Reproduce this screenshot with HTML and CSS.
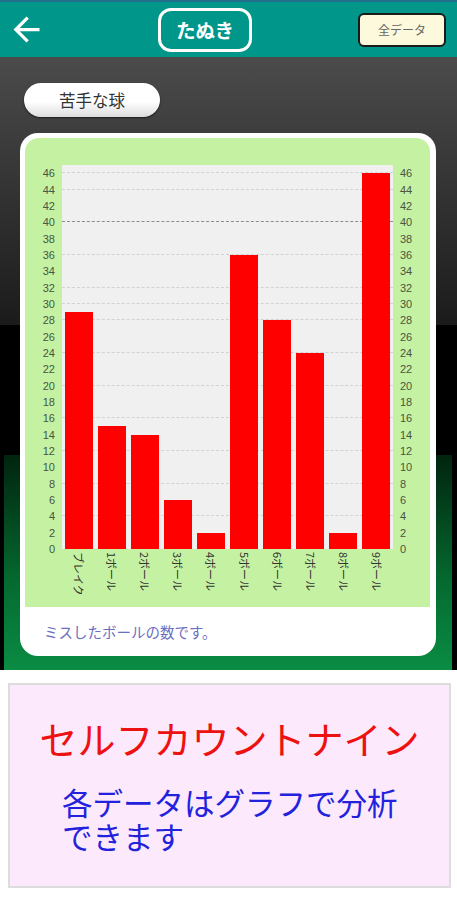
FILE: index.html
```html
<!DOCTYPE html>
<html lang="ja">
<head>
    <meta charset="UTF-8">
    <meta name="viewport" content="width=device-width, initial-scale=1.0">
    <title>苦手な球</title>
    <link rel="stylesheet" href="styles.css">
</head>
<body>
    <header class="topbar">
        <svg class="back" width="39" height="39" viewBox="0 0 24 24"><path d="M20 11H7.83l5.59-5.59L12 4l-8 8 8 8 1.41-1.41L7.83 13H20v-2z" fill="#fff"/></svg>
        <div class="player">たぬき</div>
        <div class="all-data">全データ</div>
    </header>

    <main class="stage">
        <div class="pill">苦手な球</div>
        <div class="card">
            <div class="chart">
                <div class="axis left" id="axisLeft"></div>
                <div class="plot" id="plot"></div>
                <div class="axis right" id="axisRight"></div>
                <div class="xlabels" id="xLabels"></div>
            </div>
            <p class="caption">ミスしたボールの数です。</p>
        </div>
    </main>

    <section class="promo-wrap">
        <div class="promo">
            <h1>セルフカウントナイン</h1>
            <p>各データはグラフで分析できます</p>
        </div>
    </section>

    <script>
        const data = [
            ['ブレイク', 29], ['1ボール', 15], ['2ボール', 14], ['3ボール', 6], ['4ボール', 2],
            ['5ボール', 36], ['6ボール', 28], ['7ボール', 24], ['8ボール', 2], ['9ボール', 46]
        ];
        const max = 47;
        const grid = [4, 8, 12, 16, 20, 24, 28, 30, 32, 36, 40, 44, 46];

        function pct(v) {
            return (v / max * 100) + '%';
        }

        ['axisLeft', 'axisRight'].forEach(id => {
            const axis = document.getElementById(id);
            for (let v = 0; v <= 46; v += 2) {
                const tick = document.createElement('span');
                tick.className = 'tick';
                tick.textContent = v;
                tick.style.bottom = pct(v);
                axis.appendChild(tick);
            }
        });

        const plot = document.getElementById('plot');
        grid.forEach(v => {
            const line = document.createElement('div');
            line.className = v === 40 ? 'gridline strong' : 'gridline';
            line.style.bottom = pct(v);
            plot.appendChild(line);
        });

        const labels = document.getElementById('xLabels');
        data.forEach(([name, value]) => {
            const slot = document.createElement('div');
            slot.className = 'slot';
            const bar = document.createElement('div');
            bar.className = 'bar';
            bar.style.height = pct(value);
            slot.appendChild(bar);
            plot.appendChild(slot);

            const label = document.createElement('div');
            label.className = 'xlabel';
            label.innerHTML = '<span>' + name + '</span>';
            labels.appendChild(label);
        });
    </script>
</body>
</html>
```

FILE: styles.css
```css
body {
    margin: 0;
    font-family: "Noto Sans CJK JP", "Liberation Sans", sans-serif;
    background-color: #fff;
}

.topbar {
    height: 57px;
    box-sizing: border-box;
    border-top: 2px solid #24708c;
    background-color: #00968a;
    display: flex;
    align-items: center;
    padding-left: 7px;
}
.back {
    display: block;
}
.player {
    margin-left: 112px;
    width: 94px;
    height: 44px;
    box-sizing: border-box;
    border: 3px solid #fff;
    border-radius: 13px;
    display: flex;
    align-items: center;
    justify-content: center;
    color: #fff;
    font-size: 19.5px;
    font-weight: bold;
}
.all-data {
    margin-left: auto;
    margin-right: 11px;
    width: 88px;
    height: 34px;
    box-sizing: border-box;
    border: 2px solid #1a1a1a;
    border-radius: 6px;
    background-color: #fdf9dc;
    display: flex;
    align-items: center;
    justify-content: center;
    font-size: 12px;
    color: #666;
}

.stage {
    height: 613px;
    box-sizing: border-box;
    padding-top: 26px;
    background:
        linear-gradient(#4b4b4b, #1b1b1b) 0 0 / 100% 268px no-repeat,
        linear-gradient(#01240f, #056b30 60%, #0a8c44) 4px 398px / 448px 215px no-repeat,
        #000;
}

.pill {
    margin-left: 24px;
    width: 136px;
    height: 34px;
    border-radius: 17px;
    background: linear-gradient(#fff 55%, #dcdcdc);
    box-shadow: 0 1px 2px rgba(0, 0, 0, 0.6);
    display: flex;
    align-items: center;
    justify-content: center;
    font-size: 16.5px;
    color: #333;
}

.card {
    margin: 16px 0 0 20px;
    width: 416px;
    height: 523px;
    box-sizing: border-box;
    padding: 5px 6px 0 5px;
    background-color: #fff;
    border-radius: 18px;
}

.chart {
    display: grid;
    grid-template-columns: 37px 331px 37px;
    grid-template-rows: 384px 58px;
    padding-top: 27px;
    background-color: #c5f2a2;
    border-radius: 14px 14px 0 0;
}

.axis {
    position: relative;
    font-family: "Liberation Sans", sans-serif;
    font-size: 11px;
    color: #4a5444;
}
.tick {
    position: absolute;
    line-height: 1;
    transform: translateY(50%);
}
.axis.left .tick {
    right: 7px;
}
.axis.right .tick {
    left: 7px;
}

.plot {
    position: relative;
    display: flex;
    align-items: flex-end;
    background-color: #f0f0f0;
}
.gridline {
    position: absolute;
    left: 0;
    right: 0;
    border-top: 1px dashed #d2d2d2;
}
.gridline.strong {
    border-top-color: #8c8c8c;
}
.slot {
    position: relative;
    flex: 1;
    height: 100%;
    display: flex;
    align-items: flex-end;
    justify-content: center;
}
.bar {
    width: 28px;
    background-color: #f00;
}

.xlabels {
    grid-column: 2;
    display: flex;
}
.xlabel {
    flex: 1;
    display: flex;
    justify-content: center;
    padding-top: 3px;
}
.xlabel span {
    writing-mode: vertical-rl;
    text-orientation: sideways;
    font-size: 11px;
    line-height: 1;
    color: #333;
}

.caption {
    margin: 0;
    height: 49px;
    line-height: 49px;
    padding-left: 19px;
    font-size: 14.5px;
    color: #6b6fc0;
}

.promo-wrap {
    padding: 13px 6px 12px 8px;
}
.promo {
    height: 205px;
    box-sizing: border-box;
    border: 2px solid #ddd;
    background-color: #fce9fc;
}
.promo h1 {
    margin: 0;
    padding-top: 31px;
    text-align: center;
    font-size: 38px;
    line-height: 44px;
    font-weight: normal;
    color: #ee1111;
}
.promo p {
    margin: 25px 0 0;
    padding: 0 30px 0 52px;
    font-size: 30.5px;
    line-height: 34px;
    color: #2222dd;
}
```
